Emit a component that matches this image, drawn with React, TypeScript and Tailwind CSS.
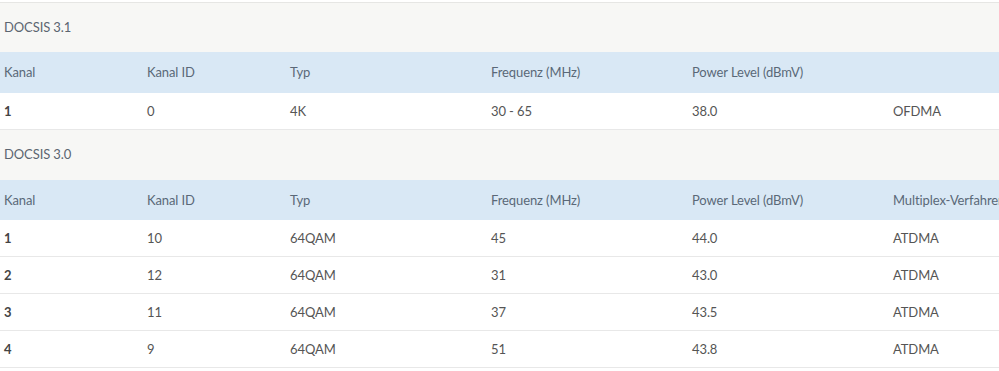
import React from 'react';

const cols = 'grid grid-cols-[143px_143px_201px_201px_201px_200px]';

const headers = ['Kanal', 'Kanal ID', 'Typ', 'Frequenz (MHz)', 'Power Level (dBmV)', 'Multiplex-Verfahren'];

const sections = [
  {
    title: 'DOCSIS 3.1',
    showLast: false,
    rows: [['1', '0', '4K', '30 - 65', '38.0', 'OFDMA']],
  },
  {
    title: 'DOCSIS 3.0',
    showLast: true,
    rows: [
      ['1', '10', '64QAM', '45', '44.0', 'ATDMA'],
      ['2', '12', '64QAM', '31', '43.0', 'ATDMA'],
      ['3', '11', '64QAM', '37', '43.5', 'ATDMA'],
      ['4', '9', '64QAM', '51', '43.8', 'ATDMA'],
    ],
  },
];

export default function App() {
  return (
    <div className="w-[999px] h-[371px] overflow-hidden bg-white pt-[2px] text-[13px] tracking-[-0.1px] font-['Lato','Liberation_Sans',sans-serif]">
      <div className="w-[1100px] border-t border-[#e6e6e4]">
        {sections.map((s, si) => (
          <div key={s.title}>
            <div className={`${si === 0 ? 'h-[49px]' : 'h-[50px]'} bg-[#f7f7f5] flex items-center px-1 text-[#5b6570]`}>
              {s.title}
            </div>
            <div className={`${cols} ${si === 0 ? 'h-[41px]' : 'h-[40px]'} bg-[#d9e8f5] items-center text-[#5a6878]`}>
              {headers.map((h, i) => (
                <div key={h} className="pl-1 pt-px">
                  {i === 5 && !s.showLast ? '' : h}
                </div>
              ))}
            </div>
            {s.rows.map((r, ri) => (
              <div key={ri} className={`${cols} h-[37px] items-center border-b border-[#e8e8e8] text-[#555]`}>
                {r.map((c, i) => (
                  <div key={i} className={`pl-1 pt-px ${i === 0 ? 'font-bold text-[#444]' : ''}`}>
                    {c}
                  </div>
                ))}
              </div>
            ))}
          </div>
        ))}
      </div>
    </div>
  );
}
